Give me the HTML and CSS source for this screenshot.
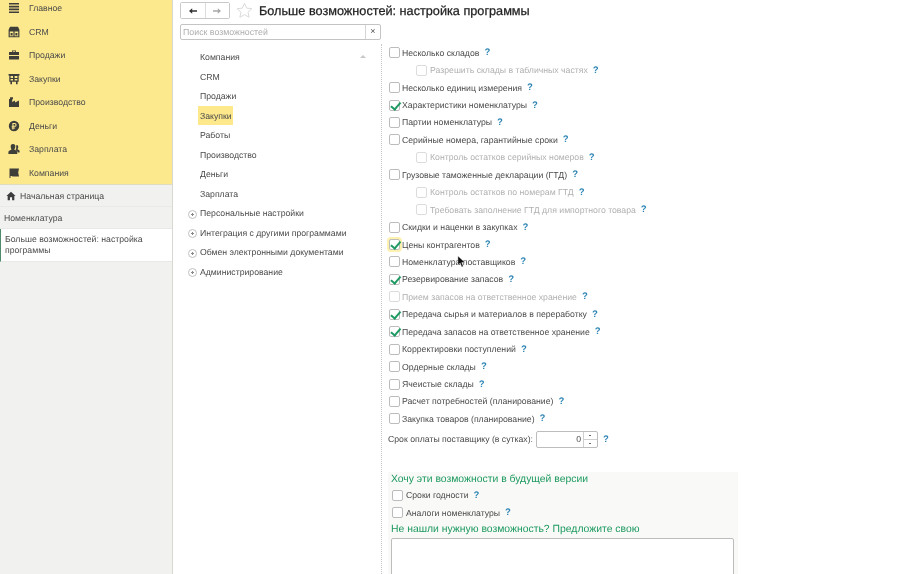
FILE: index.html
```html
<!DOCTYPE html>
<html lang="ru">
  <head>
    <meta charset="UTF-8" />
    <title>Больше возможностей: настройка программы</title>
    <link rel="stylesheet" href="styles.css">
  </head>
  <body>
    <!-- Sidebar -->
    <aside class="sidebar">
      <nav class="sections">
        <a class="section">
          <svg viewBox="0 0 12 12"><path d="M1 1h10v1.600H1zM1 3.800h10v1.600H1zM1 6.600h10v1.600H1zM1 9.400h10V11H1z"/></svg>
          <span>Главное</span>
        </a>
        <a class="section">
          <svg viewBox="0 0 12 12"><path d="M2 .8h8l1.400 3v7.400H.6V3.800zM1.800 5.600v4.600h3.600V5.600zm4.800 0v4.600h3.600V5.600z"/><path d="M2.600 7h2v2.400h-2zM7.400 7h2v2.400h-2z"/></svg>
          <span>CRM</span>
        </a>
        <a class="section">
          <svg viewBox="0 0 12 12"><path d="M4 3V1.400h4V3h3v3H1V3zM4.800 3h2.400V2.200H4.800zM1 7h10v3.600H1z"/></svg>
          <span>Продажи</span>
        </a>
        <a class="section">
          <svg viewBox="0 0 12 12"><path d="M.5 1h11v1.400h-.8v6.400H9.600v2.400H8V8.800H4v2.400H2.400V8.800H1.300V2.400H.5zM2.600 3v2h2.400V3zm4 0v2h2.800V3zm-4 3v1.600h2.400V6zm4 0v1.600h2.800V6z"/></svg>
          <span>Закупки</span>
        </a>
        <a class="section">
          <svg viewBox="0 0 12 12"><path d="M1 11V3h3.200v3L7 4.500V6.500l4-2V11zM2 1.200h3v2H2z"/></svg>
          <span>Производство</span>
        </a>
        <a class="section">
          <svg viewBox="0 0 12 12"><path fill-rule="evenodd" d="M6 .8a5.200 5.200 0 1 0 0 10.400A5.200 5.200 0 0 0 6 .8zM4.400 3h2.300a1.900 1.900 0 0 1 0 3.800H5.500v.7h1.600v.9H5.500V9.500H4.400V8.400h-.7v-.9h.7v-.7h-.7v-1h.7zm1.100 1v1.800h1.100a.9.9 0 0 0 0-1.800z"/></svg>
          <span>Деньги</span>
        </a>
        <a class="section">
          <svg viewBox="0 0 12 12"><path d="M5 1a2.300 2.300 0 0 1 2.300 2.500C7.300 5 6.500 6 6.300 6.600c.2.500 2.700 1 3 2.100V11H.4V8.700c.3-1.100 2.900-1.600 3-2.100C3.300 6 2.700 5 2.700 3.500A2.300 2.300 0 0 1 5 1zM8.500 2a1.800 1.800 0 0 1 1.800 2c0 1-.6 1.800-.7 2.300.2.400 1.500.7 2 1.500V9.500h-1.500C9.700 8.200 8.400 7.500 7.500 7c.7-1 .9-2.300.7-3.300-.1-.5 0-1.200.3-1.700z"/></svg>
          <span>Зарплата</span>
        </a>
        <a class="section">
          <svg viewBox="0 0 12 12"><path d="M1.500 1.500h9.500l-.8 4 .8 4H4.500c-.7-.5-1.500-.6-2-.3V11h-1z"/></svg>
          <span>Компания</span>
        </a>
      </nav>
      <a class="page-link home">
        <svg viewBox="0 0 12 12"><path d="M6 1l5.500 5H10v5H7.300V7.500H4.700V11H2V6H.5z"/></svg>
        <span>Начальная страница</span>
      </a>
      <a class="page-link">Номенклатура</a>
      <a class="page-link current">Больше возможностей: настройка программы</a>
    </aside>

    <main class="content">
      <!-- Toolbar -->
      <header class="toolbar">
        <div class="nav-buttons">
          <button class="nav-btn">
            <svg viewBox="0 0 12 10"><path d="M1 5l4-3.500V4h6v2H5v2.500z"/></svg>
          </button>
          <button class="nav-btn disabled">
            <svg viewBox="0 0 12 10"><path d="M11 5L7 1.500V4H1v2h6v2.500z"/></svg>
          </button>
        </div>
        <svg class="star" viewBox="0 0 18 18"><path d="M9 1.500l2.300 5 5.500.6-4.100 3.700 1.200 5.400L9 13.400l-4.900 2.800 1.200-5.400L1.200 7.100l5.500-.6z"/></svg>
        <h1>Больше возможностей: настройка программы</h1>
      </header>

      <div class="panes">
        <!-- Left tree -->
        <section class="tree-pane">
          <div class="search">
            <span class="search-text">Поиск возможностей</span>
            <span class="search-clear">×</span>
          </div>
          <ul class="tree">
            <li class="tree-item"><span>Компания</span><i class="scroll-up"></i></li>
            <li class="tree-item"><span>CRM</span></li>
            <li class="tree-item"><span>Продажи</span></li>
            <li class="tree-item selected"><span>Закупки</span></li>
            <li class="tree-item"><span>Работы</span></li>
            <li class="tree-item"><span>Производство</span></li>
            <li class="tree-item"><span>Деньги</span></li>
            <li class="tree-item"><span>Зарплата</span></li>
            <li class="tree-item group"><span>Персональные настройки</span></li>
            <li class="tree-item group"><span>Интеграция с другими программами</span></li>
            <li class="tree-item group"><span>Обмен электронными документами</span></li>
            <li class="tree-item group"><span>Администрирование</span></li>
          </ul>
        </section>

        <!-- Options -->
        <section class="options">
          <label class="opt"><i class="chk"></i>Несколько складов<b class="help">?</b></label>
          <label class="opt sub off"><i class="chk"></i>Разрешить склады в табличных частях<b class="help">?</b></label>
          <label class="opt"><i class="chk"></i>Несколько единиц измерения<b class="help">?</b></label>
          <label class="opt"><i class="chk on"></i>Характеристики номенклатуры<b class="help">?</b></label>
          <label class="opt"><i class="chk"></i>Партии номенклатуры<b class="help">?</b></label>
          <label class="opt"><i class="chk"></i>Серийные номера, гарантийные сроки<b class="help">?</b></label>
          <label class="opt sub off"><i class="chk"></i>Контроль остатков серийных номеров<b class="help">?</b></label>
          <label class="opt"><i class="chk"></i>Грузовые таможенные декларации (ГТД)<b class="help">?</b></label>
          <label class="opt sub off"><i class="chk"></i>Контроль остатков по номерам ГТД<b class="help">?</b></label>
          <label class="opt sub off"><i class="chk"></i>Требовать заполнение ГТД для импортного товара<b class="help">?</b></label>
          <label class="opt"><i class="chk"></i>Скидки и наценки в закупках<b class="help">?</b></label>
          <label class="opt"><i class="chk on focus"></i>Цены контрагентов<b class="help">?</b></label>
          <label class="opt"><i class="chk"></i>Номенклатура поставщиков<b class="help">?</b></label>
          <label class="opt"><i class="chk on"></i>Резервирование запасов<b class="help">?</b></label>
          <label class="opt off"><i class="chk"></i>Прием запасов на ответственное хранение<b class="help">?</b></label>
          <label class="opt"><i class="chk on"></i>Передача сырья и материалов в переработку<b class="help">?</b></label>
          <label class="opt"><i class="chk on"></i>Передача запасов на ответственное хранение<b class="help">?</b></label>
          <label class="opt"><i class="chk"></i>Корректировки поступлений<b class="help">?</b></label>
          <label class="opt"><i class="chk"></i>Ордерные склады<b class="help">?</b></label>
          <label class="opt"><i class="chk"></i>Ячеистые склады<b class="help">?</b></label>
          <label class="opt"><i class="chk"></i>Расчет потребностей (планирование)<b class="help">?</b></label>
          <label class="opt"><i class="chk"></i>Закупка товаров (планирование)<b class="help">?</b></label>

          <div class="term">
            <span>Срок оплаты поставщику (в сутках):</span>
            <div class="spin">
              <span class="spin-value">0</span>
              <span class="spin-btns"><i></i><i></i></span>
            </div>
            <b class="help">?</b>
          </div>

          <div class="future">
            <h2>Хочу эти возможности в будущей версии</h2>
            <label class="opt"><i class="chk"></i>Сроки годности<b class="help">?</b></label>
            <label class="opt"><i class="chk"></i>Аналоги номенклатуры<b class="help">?</b></label>
            <h2 class="second">Не нашли нужную возможность? Предложите свою</h2>
            <div class="proposal"></div>
          </div>
        </section>
      </div>
    </main>

    <!-- Mouse pointer -->
    <svg class="pointer" viewBox="0 0 10 14"><path d="M1 1v10l2.500-2.200L5.300 13l1.700-.8-1.700-4H9z"/></svg>
  </body>
</html>
```

FILE: styles.css
```css
* {
  margin: 0;
  padding: 0;
  box-sizing: border-box;
}

html, body {
  height: 100%;
}

body {
  display: flex;
  overflow: hidden;
  background-color: #fff;
  color: #4a4a4a;
  font-family: "Liberation Sans", Arial, sans-serif;
  font-size: 8.7px;
  text-rendering: geometricPrecision;
  filter: blur(0.4px);
}

/* Sidebar */
.sidebar {
  width: 173px;
  flex: none;
  background-color: #f1f1f0;
  border-right: 1px solid #d8d8d0;
}

.sections {
  height: 185px;
  background-color: #fce98e;
  border-bottom: 1px solid #e0dcc0;
  overflow: hidden;
}

.section {
  display: flex;
  align-items: center;
  height: 23.5px;
  padding-left: 8px;
  gap: 9px;
  position: relative;
  top: -3.5px;
}

.section svg {
  width: 12px;
  height: 12px;
  fill: #3f3f3a;
  flex: none;
}

.page-link {
  display: flex;
  align-items: center;
  min-height: 22px;
  padding: 0 4px;
  border-bottom: 1px solid #e9e9e7;
}

.page-link.home {
  gap: 4px;
  padding-left: 6px;
}

.home svg {
  width: 10px;
  height: 10px;
  fill: #3c3c3c;
  flex: none;
}

.page-link.current {
  min-height: 33px;
  line-height: 11px;
  background-color: #fff;
  border-left: 1px solid #4f8a6c;
  padding-left: 4px;
  padding-right: 20px;
}

/* Toolbar */
.content {
  flex: 1;
  min-width: 0;
  padding-left: 7px;
}

.toolbar {
  display: flex;
  align-items: center;
  height: 20px;
  padding-top: 1px;
}

.nav-buttons {
  display: flex;
  width: 50px;
  height: 17px;
  border: 1px solid #c9c9c9;
  border-radius: 2px;
}

.nav-btn {
  flex: 1;
  display: flex;
  align-items: center;
  justify-content: center;
  background: #fff;
  border: none;
}

.nav-btn + .nav-btn {
  border-left: 1px solid #dcdcdc;
}

.nav-btn svg {
  width: 10px;
  height: 8px;
  fill: #333;
}

.nav-btn.disabled svg {
  fill: #a9a9a9;
}

.star {
  width: 17px;
  height: 17px;
  margin-left: 6px;
  fill: #fff;
  stroke: #d8d8d8;
  stroke-width: 1;
}

.toolbar h1 {
  margin-left: 6px;
  font-size: 12.7px;
  font-weight: normal;
  color: #222;
  -webkit-text-stroke: 0.25px #222;
  white-space: nowrap;
}

/* Left tree */
.panes {
  display: flex;
  height: 554px;
}

.tree-pane {
  width: 201px;
  flex: none;
  margin-top: 4px;
}

.search {
  display: flex;
  align-items: center;
  justify-content: space-between;
  height: 16px;
  border: 1px solid #c4c4c4;
  border-radius: 2px;
  color: #aeaeae;
  font-size: 8.8px;
}

.search-text {
  padding-left: 2px;
}

.search-clear {
  width: 15px;
  height: 100%;
  border-left: 1px solid #d4d4d4;
  color: #555;
  text-align: center;
  line-height: 13px;
  font-size: 9px;
}

.tree {
  list-style: none;
  margin-top: 7.5px;
}

.tree-item {
  position: relative;
  display: flex;
  align-items: center;
  height: 19.5px;
  padding-left: 20px;
}

.tree-item.selected span {
  display: flex;
  align-items: center;
  height: 19px;
  margin-left: -2px;
  padding: 0 1px 0 2px;
  background-color: #fde98c;
}

.tree-item.group::before {
  content: "";
  position: absolute;
  left: 8px;
  top: 6px;
  width: 7px;
  height: 7px;
  border: 1px solid #c0c0c0;
  border-radius: 50%;
  background:
    linear-gradient(#888, #888) center / 3px 1px no-repeat,
    linear-gradient(#888, #888) center / 1px 3px no-repeat;
}

.scroll-up {
  position: absolute;
  left: 180px;
  top: 7px;
  border: 3px solid transparent;
  border-top: none;
  border-bottom: 3px solid #c8c8c8;
}

/* Options */
.options {
  flex: 1;
  min-width: 0;
  margin-top: 24px;
  padding-left: 6px;
  border-left: 1px dotted #c8c8c8;
}

.opt {
  display: flex;
  align-items: center;
  height: 17.45px;
  white-space: nowrap;
}

.opt.sub {
  padding-left: 27px;
}

.opt.off {
  color: #b0b0b0;
}

.chk {
  position: relative;
  display: block;
  width: 11px;
  height: 11px;
  margin-left: 1px;
  margin-right: 2px;
  flex: none;
  background-color: #fff;
  border: 1px solid #bcbcbc;
  border-radius: 2px;
}

.opt.sub .chk {
  margin-right: 3px;
}

.opt.off .chk {
  border-color: #dcdcdc;
}

.chk.on::after {
  content: "";
  position: absolute;
  left: 3px;
  top: -1px;
  width: 3.500px;
  height: 7.500px;
  border: solid #1f9a63;
  border-width: 0 2px 2px 0;
  transform: rotate(40deg);
}

.chk.focus {
  box-shadow: 0 0 0 2px #fdf1b0;
}

.help {
  margin-left: 5px;
  color: #2f86b5;
  font-size: 9.5px;
}

.term {
  display: flex;
  align-items: center;
  height: 17px;
  margin-top: 3px;
}

.spin {
  display: flex;
  width: 62px;
  height: 17px;
  margin-left: 3px;
  border: 1px solid #bdbdbd;
  border-radius: 2px;
}

.spin-value {
  flex: 1;
  padding-right: 2px;
  text-align: right;
  line-height: 15px;
}

.spin-btns {
  display: flex;
  flex-direction: column;
  width: 14px;
  border-left: 1px solid #cfcfcf;
}

.spin-btns i {
  position: relative;
  flex: 1;
}

.spin-btns i::after {
  content: "";
  position: absolute;
  left: 5px;
  top: 3px;
  width: 2px;
  height: 1px;
  background-color: #666;
}

.spin-btns i + i {
  border-top: 1px solid #cfcfcf;
}

.future {
  width: 350px;
  height: 110px;
  margin-top: 24px;
  padding: 1px 3px 0;
  background-color: #f9f9f8;
}

.future h2 {
  color: #1d9a5f;
  font-size: 10.4px;
  font-weight: normal;
  line-height: 14px;
}

.future h2.second {
  margin-top: 1px;
}

.future .chk {
  margin-right: 3px;
}

.proposal {
  width: 343px;
  height: 60px;
  margin-top: 1px;
  background-color: #fff;
  border: 1px solid #bdbdbd;
  border-radius: 2px;
}

.pointer {
  position: absolute;
  left: 457px;
  top: 255px;
  width: 9px;
  height: 13px;
  fill: #111;
  stroke: #fff;
  stroke-width: 0.4;
}
```
